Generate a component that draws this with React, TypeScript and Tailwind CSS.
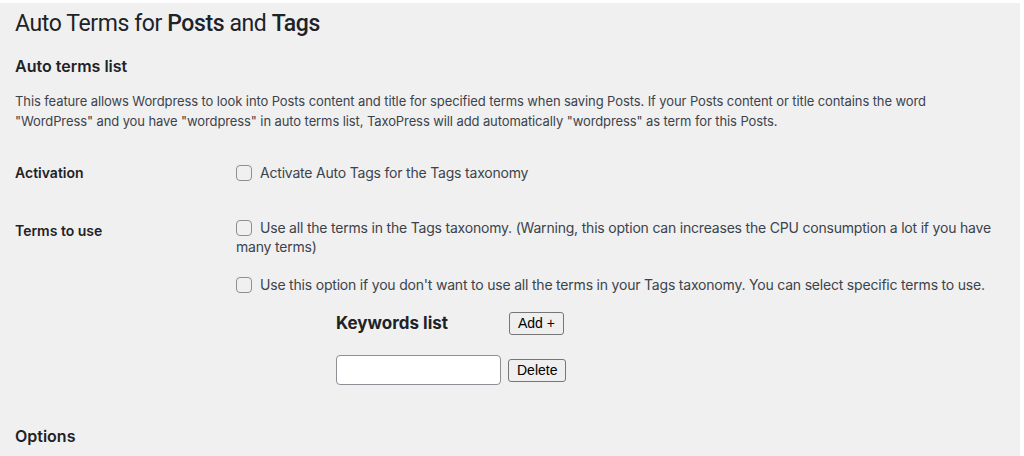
import React from 'react';

const font = { fontFamily: 'Inter, "Noto Sans", sans-serif' };

const Check: React.FC = () => (
  <span className="inline-block w-4 h-4 shrink-0 rounded-[4px] border border-[#8c8f94] align-[-3px] mr-[8px]" />
);

export default function App() {
  return (
    <div className="w-[1024px] h-[456px] bg-white pt-[3px] pr-[4px] overflow-hidden" style={font}>
      <div className="h-full bg-[#f0f0f1] pl-[15px] text-[#3c434a]">
        <h1
          className="text-[23px] leading-[29px] pt-[6px] text-[#1d2327] tracking-[-0.4px]"
          style={{ fontFamily: 'Roboto, "Noto Sans", sans-serif' }}
        >
          Auto Terms for <b className="font-medium">Posts</b> and <b className="font-medium">Tags</b>
        </h1>

        <h2 className="mt-[18px] text-[16px] leading-[20px] font-semibold text-[#1d2327]">Auto terms list</h2>

        <p className="mt-[15px] text-[13px] leading-[20px] pr-[50px] tracking-[-0.1px]">
          This feature allows Wordpress to look into Posts content and title for specified terms when saving Posts. If your Posts content or title contains the word "WordPress" and you have "wordpress" in auto terms list, TaxoPress will add automatically "wordpress" as term for this Posts.
        </p>

        {/* Activation */}
        <div className="flex mt-[32px]">
          <div className="w-[221px] shrink-0 text-[14px] leading-[20px] font-semibold text-[#1d2327]">Activation</div>
          <label className="text-[14px] leading-[20px] tracking-[-0.2px]">
            <Check />
            Activate Auto Tags for the Tags taxonomy
          </label>
        </div>

        {/* Terms to use */}
        <div className="flex mt-[34px]">
          <div className="w-[221px] shrink-0 pt-[4px] text-[14px] leading-[20px] font-semibold text-[#1d2327]">Terms to use</div>
          <div className="w-[766px] shrink-0 text-[14px] leading-[19px] tracking-[-0.2px]">
            <p className="pt-px">
              <Check />
              Use all the terms in the Tags taxonomy. (Warning, this option can increases the CPU consumption a lot if you have many terms)
            </p>
            <p className="mt-[19px]">
              <Check />
              Use this option if you don't want to use all the terms in your Tags taxonomy. You can select specific terms to use.
            </p>

            <div className="ml-[100px] mt-[18px] tracking-normal" style={{ fontFamily: '"Liberation Sans", Arial, sans-serif' }}>
              <div className="flex items-center">
                <div className="w-[173px] text-[17px] font-bold text-[#1d2327]" style={font}>Keywords list</div>
                <button className="h-[23px] px-[8px] text-[14px] text-black bg-[#efefef] border border-[#767676] rounded-[3px]">Add +</button>
              </div>
              <div className="flex items-center mt-[20px] gap-[7px]">
                <input className="w-[165px] h-[30px] bg-white border border-[#8c8f94] rounded-[4px]" />
                <button className="h-[23px] px-[8px] text-[14px] text-black bg-[#efefef] border border-[#767676] rounded-[3px]">Delete</button>
              </div>
            </div>
          </div>
        </div>

        <h2 className="mt-[41px] text-[16px] leading-[20px] font-semibold text-[#1d2327]">Options</h2>
      </div>
    </div>
  );
}
